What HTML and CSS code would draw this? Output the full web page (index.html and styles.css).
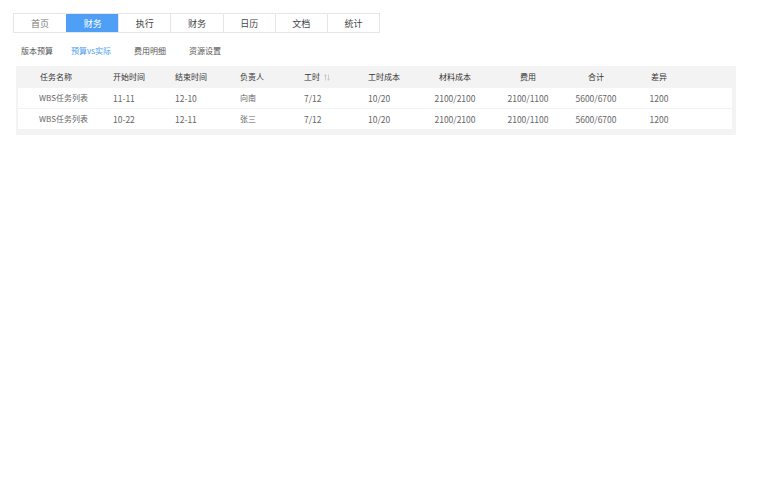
FILE: index.html
```html
<!DOCTYPE html>
<html lang="zh-CN">
<head>
    <meta charset="UTF-8">
    <meta name="viewport" content="width=device-width, initial-scale=1.0">
    <title>预算vs实际</title>
    <link rel="stylesheet" href="styles.css">
</head>
<body>
    <div class="page">
        <div class="main-tabs">
            <div class="main-tab">首页</div>
            <div class="main-tab active">财务</div>
            <div class="main-tab">执行</div>
            <div class="main-tab">财务</div>
            <div class="main-tab">日历</div>
            <div class="main-tab">文档</div>
            <div class="main-tab">统计</div>
        </div>
        <div class="sub-tabs">
            <span class="sub-tab">版本预算</span>
            <span class="sub-tab active">预算vs实际</span>
            <span class="sub-tab">费用明细</span>
            <span class="sub-tab">资源设置</span>
        </div>
        <div class="table-panel">
            <div class="row head">
                <div>任务名称</div>
                <div>开始时间</div>
                <div>结束时间</div>
                <div>负责人</div>
                <div>工时 <svg class="sort" width="6" height="7" viewBox="0 0 6 7"><path d="M1.5 6.5V0.8M0.3 2L1.5 0.8L2.7 2M4.5 0.5V6.2M3.3 5L4.5 6.2L5.7 5" fill="none" stroke="#bbb" stroke-width="0.7"/></svg></div>
                <div>工时成本</div>
                <div>材料成本</div>
                <div>费用</div>
                <div>合计</div>
                <div>差异</div>
            </div>
            <div class="body">
                <div class="row">
                    <div>WBS任务列表</div>
                    <div class="num">11-11</div>
                    <div class="num">12-10</div>
                    <div>向南</div>
                    <div class="num">7/12</div>
                    <div class="num">10/20</div>
                    <div class="num">2100/2100</div>
                    <div class="num">2100/1100</div>
                    <div class="num">5600/6700</div>
                    <div class="num">1200</div>
                </div>
                <div class="row">
                    <div>WBS任务列表</div>
                    <div class="num">10-22</div>
                    <div class="num">12-11</div>
                    <div>张三</div>
                    <div class="num">7/12</div>
                    <div class="num">10/20</div>
                    <div class="num">2100/2100</div>
                    <div class="num">2100/1100</div>
                    <div class="num">5600/6700</div>
                    <div class="num">1200</div>
                </div>
            </div>
        </div>
    </div>
</body>
</html>
```

FILE: styles.css
```css
body {
    margin: 0;
    font-family: "Noto Sans CJK SC", "Noto Sans", sans-serif;
    background: #fff;
    color: #555;
}
.page {
    padding: 13px 24px 0 13px;
}
.main-tabs {
    display: grid;
    grid-template-columns: repeat(7, 1fr);
    width: 367px;
    height: 20px;
    border: 1px solid #e6e6e6;
    box-sizing: border-box;
}
.main-tab {
    display: flex;
    align-items: center;
    justify-content: center;
    font-size: 9px;
    color: #444;
    border-left: 1px solid #e6e6e6;
}
.main-tab:first-child {
    border-left: none;
    color: #777;
}
.main-tab.active {
    background: #4e9ff5;
    color: #fff;
    border-left-color: #4e9ff5;
}
.sub-tabs {
    display: flex;
    padding: 10px 0 0 8px;
    height: 14px;
    align-items: center;
}
.sub-tab {
    font-size: 8px;
    color: #555;
    margin-right: 23px;
}
.sub-tab:first-child {
    margin-right: 18px;
}
.sub-tab.active {
    color: #4a9cf0;
}
.table-panel {
    margin: 9px 0 0 3px;
    width: 720px;
    background: #f3f3f3;
    padding: 0 4px 6px 2px;
    box-sizing: border-box;
}
.row {
    display: grid;
    grid-template-columns: 82px 54px 70px 52px 74px 64px 82px 64px 72px 54px 1fr;
    align-items: center;
    height: 20px;
    box-sizing: border-box;
    font-size: 8px;
    padding-bottom: 1px;
}
.row > div {
    text-align: center;
    white-space: nowrap;
}
.row > div:nth-child(-n+6) {
    text-align: left;
}
.row > div:nth-child(1) {
    padding-left: 21px;
}
.row > div:nth-child(2) {
    padding-left: 13px;
}
.row > div:nth-child(3) {
    padding-left: 21px;
}
.row > div:nth-child(4) {
    padding-left: 16px;
}
.row > div:nth-child(5) {
    padding-left: 28px;
}
.row > div:nth-child(6) {
    padding-left: 18px;
}
.row.head {
    height: 22px;
    color: #333;
}
.head > div:nth-child(1) {
    padding-left: 22px;
}
.sort {
    vertical-align: -1px;
    margin-left: 2px;
}
.body {
    background: #fff;
}
.body .row {
    color: #666;
}
.body .row + .row {
    border-top: 1px solid #f2f2f2;
    height: 21px;
}
.num {
    font-size: 8.5px;
}
```
